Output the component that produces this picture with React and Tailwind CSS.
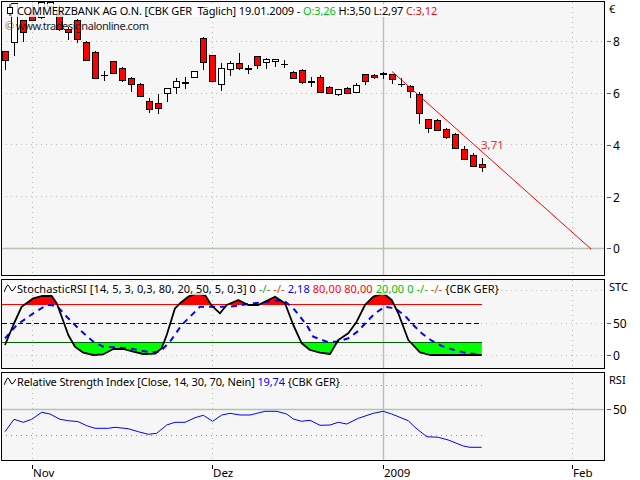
const CANDLES = [
  [51, 60, 51, 70, 'r'], [3, 42, 3, 56, 'w'], [20, 32, 20, 42, 'r'], [12, 20, 5, 20, 'r'],
  [2, 17, 2, 19, 'w'], [2, 6, 2, 8, 'w'], [10, 29, 5, 31, 'r'], [29, 32, 27, 40, 'r'],
  [20, 39, 19, 43, 'r'], [42, 60, 41, 60, 'r'], [52, 78, 51, 79, 'r'], [75, 75, 71, 81, 'd'],
  [61, 73, 61, 73, 'r'], [68, 80, 67, 82, 'r'], [78, 84, 77, 92, 'r'], [84, 96, 83, 97, 'r'],
  [101, 109, 98, 113, 'r'], [103, 108, 94, 114, 'r'], [88, 93, 88, 102, 'w'], [81, 87, 78, 94, 'w'],
  [82, 82, 77, 89, 'D'], [71, 77, 71, 78, 'w'], [38, 62, 37, 70, 'r'], [55, 81, 55, 81, 'r'],
  [68, 84, 63, 91, 'w'], [63, 69, 61, 76, 'w'], [63, 68, 53, 70, 'r'], [68, 68, 65, 74, 'D'],
  [56, 65, 56, 69, 'r'], [59, 62, 58, 69, 'w'], [59, 61, 59, 67, 'w'], [64, 64, 60, 68, 'd'],
  [72, 78, 71, 79, 'r'], [70, 82, 69, 84, 'r'], [81, 81, 77, 87, 'D'], [77, 92, 75, 93, 'r'],
  [87, 93, 86, 93, 'r'], [89, 94, 89, 96, 'w'], [88, 93, 87, 93, 'r'], [85, 92, 83, 93, 'w'],
  [74, 81, 74, 85, 'r'], [75, 77, 74, 79, 'r'], [73, 73, 72, 79, 'D'], [74, 79, 74, 84, 'r'],
  [84, 84, 78, 87, 'd'], [86, 91, 85, 98, 'r'], [94, 113, 92, 124, 'r'], [119, 128, 119, 133, 'r'],
  [120, 130, 119, 131, 'r'], [129, 137, 128, 139, 'r'], [134, 148, 133, 149, 'r'], [149, 159, 146, 160, 'r'],
  [155, 166, 153, 167, 'r'], [164, 167, 158, 172, 'r'],
];

const left = (pts, oy) => pts.map(([x, y]) => [x / 3, oy + y / 3]);
const right = (pts, oy) => pts.map(([x, y]) => [320 + x / 3, oy + y / 3]);
const toPoints = (pts) => pts.map(([x, y]) => `${x.toFixed(1)},${y.toFixed(1)}`).join(' ');

const STOCH_K = [
  ...left([[15, 210], [40, 150], [65, 95], [100, 70], [125, 63], [155, 63], [170, 85], [185, 125], [205, 180], [225, 215], [250, 233], [280, 240], [310, 238], [340, 222], [370, 222], [400, 230], [430, 237], [465, 236], [485, 220], [500, 180], [525, 100], [540, 85], [565, 65], [590, 55], [615, 60], [635, 92], [660, 115], [680, 90], [715, 75], [745, 90], [775, 90], [825, 65], [855, 85], [880, 150], [905, 205], [930, 225]], 275),
  ...right([[0, 233], [30, 237], [55, 195], [85, 175], [110, 140], [135, 90], [160, 65], [190, 55], [215, 75], [235, 115], [265, 195], [300, 232], [330, 240], [485, 240]], 275),
];

const STOCH_D = [
  ...left([[15, 190], [50, 150], [100, 115], [140, 90], [170, 92], [200, 125], [240, 165], [280, 200], [310, 215], [350, 217], [400, 222], [450, 232], [480, 230], [510, 200], [545, 150], [600, 95], [640, 95], [690, 95], [745, 87], [800, 80], [850, 75], [880, 100], [920, 150]], 275),
  ...right([[-20, 185], [20, 200], [50, 200], [85, 190], [115, 168], [140, 140], [165, 115], [195, 95], [225, 100], [255, 122], [280, 150], [305, 175], [335, 197], [365, 213], [395, 223], [430, 232], [470, 238]], 275),
];

const RSI = [
  ...left([[15, 185], [42, 148], [70, 157], [95, 148], [125, 127], [150, 132], [180, 148], [205, 152], [235, 155], [260, 167], [285, 175], [325, 175], [345, 172], [385, 176], [415, 185], [445, 193], [470, 190], [500, 165], [525, 157], [555, 157], [585, 143], [610, 136], [638, 154], [665, 135], [690, 130], [720, 135], [750, 135], [795, 124], [830, 124], [860, 132], [880, 147], [905, 154], [930, 151]], 370),
  ...right([[0, 166], [30, 165], [55, 157], [80, 162], [115, 145], [160, 130], [190, 124], [215, 132], [265, 152], [285, 172], [320, 200], [355, 202], [385, 210], [430, 228], [450, 232], [485, 232]], 370),
];

// dotted time grid shared by all three panes
function TimeGrid({ y1, y2 }) {
  return (
    <>
      {[32, 212, 572].map((x) => (
        <line key={x} x1={x + 0.5} x2={x + 0.5} y1={y1} y2={y2} stroke="#a6c9a6" strokeDasharray="1 4" />
      ))}
      <line x1="383.5" x2="383.5" y1={y1} y2={y2} stroke="#b4c4b4" strokeWidth="1.4" />
    </>
  );
}

function Candle({ c, x }) {
  const [top, bottom, wickTop, wickBottom, kind] = c;
  const cx = x + 0.5;
  if (kind === 'd' || kind === 'D') {
    return (
      <g stroke="#000" shapeRendering="crispEdges">
        <line x1={cx} x2={cx} y1={wickTop} y2={wickBottom} />
        <line x1={cx - 3.5} x2={cx + 3.5} y1={top + 0.5} y2={top + 0.5} strokeWidth={kind === 'D' ? 2 : 1} />
      </g>
    );
  }
  return (
    <g stroke="#000" shapeRendering="crispEdges">
      <line x1={cx} x2={cx} y1={wickTop} y2={wickBottom} />
      <rect x={cx - 3} y={top + 0.5} width="6" height={bottom - top} fill={kind === 'r' ? '#ff0000' : '#ffffff'} />
    </g>
  );
}

function PriceChart() {
  return (
    <svg viewBox="2 2 602 273" className="block w-full h-full">
      {[41, 93, 144, 196].map((y) => (
        <line key={y} x1="6" x2="604" y1={y + 0.5} y2={y + 0.5} stroke="#bdbdbd" strokeDasharray="1 4" />
      ))}
      <line x1="2" x2="604" y1="248.5" y2="248.5" stroke="#b4c4b0" strokeWidth="1.4" />
      <TimeGrid y1={2} y2={275} />
      {CANDLES.map((c, i) => (
        <Candle key={i} c={c} x={5 + 9 * i} />
      ))}
      <line x1="392" y1="71.5" x2="591" y2="249" stroke="#ff0000" />
      <text x="481" y="149" fontSize="11.5" fill="#e8303a">3,71</text>
    </svg>
  );
}

function StochChart() {
  const closed = toPoints(STOCH_K);
  return (
    <svg viewBox="2 280 602 88" className="block w-full h-full">
      <defs>
        <clipPath id="above80"><rect x="2" y="280" width="602" height="24.5" /></clipPath>
        <clipPath id="below20"><rect x="2" y="342" width="602" height="26" /></clipPath>
      </defs>
      {[290, 323, 355].map((y) => (
        <line key={y} x1="6" x2="604" y1={y + 0.5} y2={y + 0.5} stroke="#bcc8bc" strokeDasharray="1 4" />
      ))}
      <TimeGrid y1={280} y2={368} />
      <polygon points={`${closed} 482,304 5,304`} fill="#ff0000" clipPath="url(#above80)" />
      <polygon points={`${closed} 482,342 5,342`} fill="#00ff00" clipPath="url(#below20)" />
      <line x1="2" x2="482" y1="304.5" y2="304.5" stroke="#ff0000" />
      <line x1="2" x2="482" y1="342.5" y2="342.5" stroke="#006400" />
      <line x1="2" x2="482" y1="323.5" y2="323.5" stroke="#000" strokeDasharray="5 3" />
      <polyline points={toPoints(STOCH_D)} fill="none" stroke="#0000ff" strokeWidth="2" strokeDasharray="6 5" />
      <polyline points={closed} fill="none" stroke="#000" strokeWidth="1.8" strokeLinejoin="round" />
    </svg>
  );
}

function RsiChart() {
  return (
    <svg viewBox="2 373 602 87" className="block w-full h-full">
      <line x1="6" x2="482" y1="385.5" y2="385.5" stroke="#9c9c9c" strokeDasharray="1 4" />
      <line x1="6" x2="482" y1="435.5" y2="435.5" stroke="#8a8a8a" strokeDasharray="1 4" />
      <line x1="2" x2="604" y1="409.5" y2="409.5" stroke="#b4c4b0" strokeWidth="1.4" />
      <TimeGrid y1={373} y2={460} />
      <polyline points={toPoints(RSI)} fill="none" stroke="#0000ff" />
    </svg>
  );
}

function Wave() {
  return (
    <svg width="12" height="9" viewBox="0 0 12 9" className="shrink-0">
      <path d="M0 8 L3 1.5 Q4 0.5 5 2 L7 6 Q8 7.5 9 6.5 L12 2" fill="none" stroke="#000" />
    </svg>
  );
}

function PaneTitle({ children }) {
  return (
    <div className="absolute left-[2px] top-[2px] h-[13px] flex items-center gap-[1px] pr-[1px] bg-white/80 whitespace-pre">
      {children}
    </div>
  );
}

// y axis column, coordinates follow the pane they sit next to
function Axis({ top, height, ticks, label, labelY }) {
  return (
    <svg viewBox={`605 ${top} 35 ${height}`} className="block w-[35px]" style={{ height }}>
      {ticks.map(([y, text]) => (
        <g key={text}>
          <line x1="607" x2="611" y1={y + 0.5} y2={y + 0.5} stroke="#555" />
          <text x="613" y={y + 5} fontSize="12" fill="#000">{text}</text>
        </g>
      ))}
      {label && <text x="609" y={labelY} fontSize="11" fill="#000">{label}</text>}
    </svg>
  );
}

function Month({ x, children }) {
  return (
    <g>
      <line x1={x + 0.5} x2={x + 0.5} y1="4" y2="8" stroke="#000" />
      <text x={x + 1} y="16" fontSize="11.5" fill="#000">{children}</text>
    </g>
  );
}

export default function App() {
  return (
    <div className="w-[640px] h-[480px] bg-white overflow-hidden pt-[1px] pl-[1px] flex flex-col font-['Noto_Sans',sans-serif] text-[11px] leading-none text-black">
      <div className="flex">
        <div className="relative w-[604px] h-[275px] border border-black bg-[#f6f6f6]">
          <PriceChart />
          <PaneTitle>
            <svg width="12" height="13" viewBox="0 0 12 13" className="shrink-0">
              <path d="M6 0V3M6 9V12" stroke="#000" />
              <rect x="3.5" y="3.5" width="5" height="6" fill="#fff" stroke="#000" />
            </svg>
            <span className="tracking-[-0.11px]">COMMERZBANK AG O.N. [CBK GER  Täglich] 19.01.2009 - <span className="text-[#00c000]">O:3,26</span> H:3,50 L:2,97 <span className="text-[#ff0000]">C:3,12</span></span>
          </PaneTitle>
          <div className="absolute left-[3px] top-[18px] whitespace-nowrap text-[#222] tracking-[-0.46px]"><span className="text-[#a06a10]">©</span> www.tradesignalonline.com</div>
        </div>
        <Axis top={1} height={275} ticks={[[41, '8'], [93, '6'], [145, '4'], [197, '2'], [248, '0']]} label="€" labelY={13} />
      </div>
      <div className="flex mt-[3px]">
        <div className="relative w-[604px] h-[90px] border border-black bg-[#f6f6f6]">
          <StochChart />
          <PaneTitle>
            <Wave />
            <span className="tracking-[0.08px]">StochasticRSI [14, 5, 3, 0,3, 80, 20, 50, 5, 0,3] 0 <span className="text-[#2a9a20]">-/-</span> <span className="text-[#e04020]">-/-</span> <span className="text-[#0000ff]">2,18</span> <span className="text-[#ff0000]">80,00 80,00</span> <span className="text-[#00c000]">20,00 0 -/-</span> <span className="text-[#e04020]">-/-</span> {'{CBK GER}'}</span>
          </PaneTitle>
        </div>
        <Axis top={279} height={90} ticks={[[323, '50'], [355, '0']]} label="STC" labelY={291} />
      </div>
      <div className="flex mt-[3px]">
        <div className="relative w-[604px] h-[89px] border border-black bg-[#f6f6f6]">
          <RsiChart />
          <PaneTitle>
            <Wave />
            <span className="tracking-[-0.12px]">Relative Strength Index [Close, 14, 30, 70, Nein] <span className="text-[#0000ff]">19,74</span> {'{CBK GER}'}</span>
          </PaneTitle>
        </div>
        <Axis top={372} height={89} ticks={[[409, '50']]} label="RSI" labelY={384} />
      </div>
      <svg viewBox="1 0 639 19" className="block w-[639px] h-[19px] shrink-0">
        <Month x={32}>Nov</Month>
        <Month x={212}>Dez</Month>
        <Month x={383}>2009</Month>
        <Month x={572}>Feb</Month>
      </svg>
    </div>
  );
}
